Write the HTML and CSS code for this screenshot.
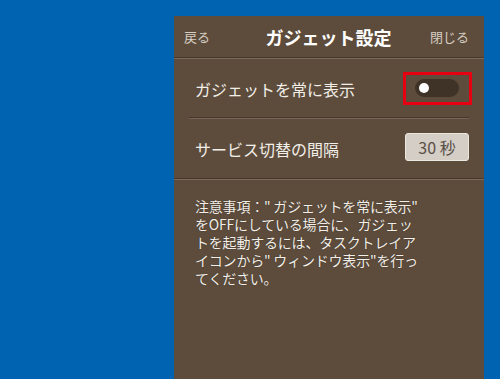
FILE: index.html
```html
<!DOCTYPE html>
<html>
<head lang="ja">
    <meta charset="UTF-8">
    <meta name="viewport" content="width=device-width,initial-scale=1.0,user-scalable=no">
    <title>ガジェット設定</title>
    <link rel="stylesheet" href="styles.css">
</head>
<body>
<div id="panel">
    <div class="head">
        <span class="head-btn">戻る</span>
        <span class="head-title">ガジェット設定</span>
        <span class="head-btn">閉じる</span>
    </div>
    <div class="row row-first">
        <span class="row-label">ガジェットを常に表示</span>
        <span class="mark">
            <span class="switch"><span class="knob"></span></span>
        </span>
    </div>
    <div class="row row-last">
        <span class="row-label">サービス切替の間隔</span>
        <span class="sec-btn">30 秒</span>
    </div>
    <div class="note">
        <p>注意事項：" ガジェットを常に表示"</p>
        <p>をOFFにしている場合に、ガジェッ</p>
        <p>トを起動するには、タスクトレイア</p>
        <p>イコンから" ウィンドウ表示"を行っ</p>
        <p>てください。</p>
    </div>
</div>
</body>
</html>
```

FILE: styles.css
```css
body, div, p, span {
    margin: 0;
    padding: 0;
    border: none;
}

body {
    width: 100%;
    height: 379px;
    overflow: hidden;
    background: #0063b1;
    font-family: "Noto Sans CJK JP", "Noto Sans", sans-serif;
    color: #f2eee8;
}

#panel {
    margin: 16px 0 0 174px;
    width: 310px;
    height: 363px;
    background: #5d4c3c;
}

.head {
    display: flex;
    align-items: center;
    justify-content: space-between;
    height: 41px;
    padding: 0 15px 0 10px;
    border-bottom: 1px solid #45372a;
    box-shadow: 0 1px 0 #7a6a5a;
}

.head-btn {
    font-size: 13px;
    color: #d6cdc3;
}

.head-title {
    font-size: 18px;
    font-weight: bold;
    color: #fff;
    margin-left: 17px;
}

.row {
    display: flex;
    align-items: center;
    justify-content: space-between;
    margin: 0 15px;
    padding-left: 6px;
}

.row-first {
    height: 57px;
    margin-top: 2px;
    border-bottom: 1px solid #45372a;
    box-shadow: 0 1px 0 #75655a;
}

.row-last {
    height: 59px;
    margin: 1px 0 0 0;
    padding: 0 15px 0 21px;
    border-bottom: 1px solid #45372a;
    box-shadow: 0 1px 0 #7a6a5a;
}

.row-label {
    font-size: 16px;
    color: #f2eee8;
}

.mark {
    display: flex;
    margin-right: -3px;
    padding: 4px 10px 5px 9px;
    border: 3px solid #e60012;
}

.switch {
    position: relative;
    display: block;
    width: 44px;
    height: 18px;
    border-radius: 9px;
    background: #3f3327;
}

.knob {
    position: absolute;
    left: 4px;
    top: 4px;
    width: 10px;
    height: 10px;
    border-radius: 50%;
    background: #fff;
}

.sec-btn {
    display: flex;
    align-items: center;
    justify-content: center;
    width: 62px;
    height: 26px;
    margin-top: -3px;
    border: 1px solid #ebe6df;
    border-radius: 3px;
    background: #d4cec6;
    color: #595048;
    font-size: 16px;
}

.note {
    padding: 18px 0 0 21px;
    font-size: 14px;
    letter-spacing: -0.2px;
    color: #f2eee8;
}

.note p {
    height: 18px;
    line-height: 18px;
    text-shadow: 0 0 1px #2e241a;
}
```
